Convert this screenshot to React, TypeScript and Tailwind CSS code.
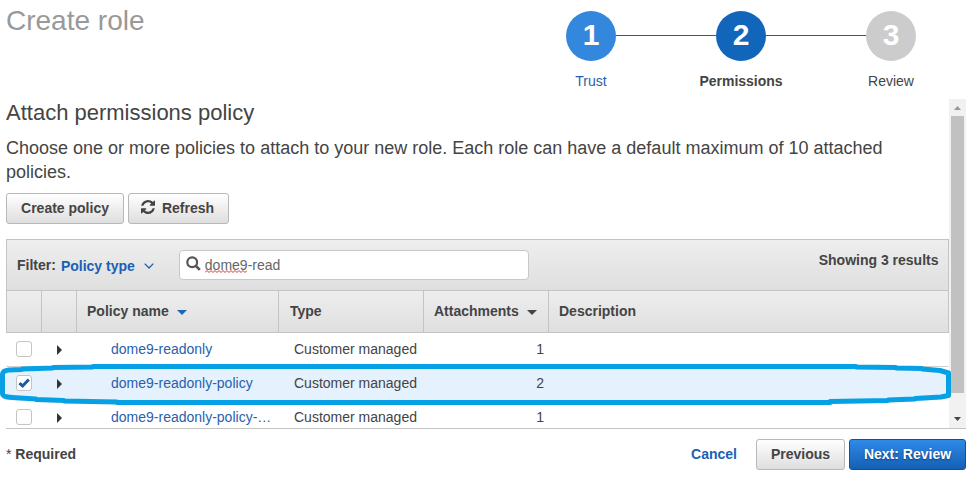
import type { ReactNode } from 'react';

type Policy = { name: string; type: string; attachments: number; checked: boolean };

const policies: Policy[] = [
  { name: 'dome9-readonly', type: 'Customer managed', attachments: 1, checked: false },
  { name: 'dome9-readonly-policy', type: 'Customer managed', attachments: 2, checked: true },
  { name: 'dome9-readonly-policy-…', type: 'Customer managed', attachments: 1, checked: false },
];

function Step({ number, label, circle, text }: { number: number; label: string; circle: string; text: string }) {
  return (
    <div className="flex w-[50px] flex-col items-center">
      <div className={`flex size-[50px] items-center justify-center rounded-full pb-px text-[30px] font-bold text-white ${circle}`}>
        {number}
      </div>
      <div className={`mt-3 text-sm leading-4 whitespace-nowrap ${text}`}>{label}</div>
    </div>
  );
}

function Button({ children, className }: { children: ReactNode; className: string }) {
  return (
    <button
      className={`flex h-[31px] items-center justify-center rounded-[3px] border border-[#b8b8b8] bg-linear-to-b from-white to-[#dedede] pb-[2px] text-sm font-bold text-[#444] ${className}`}
    >
      {children}
    </button>
  );
}

function RefreshIcon() {
  return (
    <svg className="mt-[-1px] mr-[7px] -ml-[2px] size-[14px]" viewBox="0 0 1536 1536" fill="#444">
      <path d="M1511 928q0 5-1 7-64 268-268 434.500T764 1536q-146 0-282.500-55T238 1324l-129 129q-19 19-45 19t-45-19-19-45V960q0-26 19-45t45-19h448q26 0 45 19t19 45-19 45l-137 137q71 66 161 102t187 36q134 0 250-65t186-179q11-17 53-117 8-23 30-23h192q13 0 22.500 9.500t9.500 22.500zm25-800v448q0 26-19 45t-45 19h-448q-26 0-45-19t-19-45 19-45l138-138Q969 256 768 256q-134 0-250 65T332 500q-11 17-53 117-8 23-30 23H50q-13 0-22.500-9.500T18 608v-7q65-268 270-434.500T768 0q146 0 284 55.500T1297 212l130-129q19-19 45-19t45 19 19 45z" />
    </svg>
  );
}

function Checkbox({ checked }: { checked: boolean }) {
  return (
    <span className="flex size-4 items-center justify-center rounded-[3px] border border-[#c4c4c4] bg-white">
      {checked && (
        <svg className="size-3" viewBox="0 0 12 12" fill="none" stroke="#1a5ba8" strokeWidth="3">
          <path d="M1.4 6.200 4.600 9 10.800 2.500" />
        </svg>
      )}
    </span>
  );
}

const grid = 'grid grid-cols-[35px_35px_202px_145px_125px_1fr]';

export default function App() {
  return (
    <div className="relative flex h-[479px] w-[976px] flex-col overflow-hidden bg-white pr-[10px] pl-[6px] font-['Liberation_Sans',Arial,sans-serif] text-sm text-[#444]">
      <header className="flex h-[99px] items-start justify-between">
        <h1 className="mt-[5px] text-[28px] leading-8 text-[#999]">Create role</h1>
        <div className="mt-[11px] mr-[50px] flex">
          <Step number={1} label="Trust" circle="bg-[#3388dd]" text="text-[#2a5fac]" />
          <div className="mt-6 h-px w-[100px] bg-[#555]" />
          <Step number={2} label="Permissions" circle="bg-[#1166bb]" text="font-bold" />
          <div className="mt-6 h-px w-[100px] bg-[#555]" />
          <Step number={3} label="Review" circle="bg-[#cccccc]" text="" />
        </div>
      </header>

      <main className="flex h-[330px] overflow-hidden border-b border-[#c4c4c4]">
        <div className="w-[943px]">
          <h2 className="text-[22px] leading-[27px]">Attach permissions policy</h2>
          <p className="mt-[10px] text-lg leading-6">
            Choose one or more policies to attach to your new role. Each role can have a default maximum of 10 attached
            policies.
          </p>
          <div className="mt-[9px] flex gap-1">
            <Button className="w-[118px]">Create policy</Button>
            <Button className="w-[101px]">
              <RefreshIcon />
              Refresh
            </Button>
          </div>

          <section className="mt-[15px]">
            <div className="flex h-[51px] items-center border border-b-0 border-[#c4c4c4] bg-linear-to-b from-[#eeeeee] to-[#dfdfdf] pr-[10px] pl-[10px]">
              <span className="font-bold">Filter:</span>
              <span className="mt-[2px] ml-[5px] font-bold text-[#1a5fb4]">Policy type</span>
              <svg className="mt-[2px] ml-[9px] h-[6px] w-[10px]" viewBox="0 0 10 6" fill="none" stroke="#1a5fb4" strokeWidth="1.3">
                <path d="M.7.6 5 5 9.300.6" />
              </svg>
              <div className="ml-[25px] flex h-[30px] w-[350px] items-center rounded-[4px] border border-[#c8c8c8] bg-white pl-[6px]">
                <svg className="mt-[-3px] size-[15px]" viewBox="0 0 15 15" fill="none" stroke="#555">
                  <circle cx="6.200" cy="6.200" r="4.900" strokeWidth="2.200" />
                  <path d="M9.800 9.800 13.800 13.800" strokeWidth="2.600" />
                </svg>
                <span className="ml-1 text-[#666]">
                  <span className="relative">
                    dome9
                    <svg className="absolute top-[13px] left-0 h-[3px] w-[42px]" viewBox="0 0 42 3" fill="none" stroke="#d33" strokeWidth="1">
                      <path d="M0 2.500 2 .5 4 2.500 6 .5 8 2.500 10 .5 12 2.500 14 .5 16 2.500 18 .5 20 2.500 22 .5 24 2.500 26 .5 28 2.500 30 .5 32 2.500 34 .5 36 2.500 38 .5 40 2.500 42 .5" />
                    </svg>
                  </span>
                  -read
                </span>
              </div>
              <span className="mt-[-11px] mr-[-0.5px] ml-auto font-bold">Showing 3 results</span>
            </div>

            <div className={`${grid} h-[43px] border border-[#c4c4c4] bg-linear-to-b from-[#eeeeee] to-[#dfdfdf] font-bold`}>
              <div className="border-r border-[#c4c4c4]" />
              <div className="border-r border-[#c4c4c4]" />
              <div className="flex items-center border-r border-[#c4c4c4] pb-[2px] pl-[10px]">
                Policy name
                <svg className="mt-[4px] ml-[8px] h-[5px] w-[10px]" viewBox="0 0 10 5" fill="#1a66bb">
                  <path d="M0 0h10L5 5z" />
                </svg>
              </div>
              <div className="flex items-center border-r border-[#c4c4c4] pb-[2px] pl-[11px]">Type</div>
              <div className="flex items-center border-r border-[#c4c4c4] pb-[2px] pl-[10px]">
                Attachments
                <svg className="mt-[4px] ml-[8px] h-[5px] w-[10px]" viewBox="0 0 10 5" fill="#444">
                  <path d="M0 0h10L5 5z" />
                </svg>
              </div>
              <div className="flex items-center pb-[2px] pl-[10px]">Description</div>
            </div>

            {policies.map((policy) => (
              <div
                key={policy.name}
                className={`${grid} h-[34px] items-center border-x border-b border-x-transparent pb-[2px] ${policy.checked ? 'rounded-[40px/5px] border-b-transparent bg-[#e5f1fd]' : 'border-b-[#d0d0d0] bg-white'}`}
              >
                <div className="pl-[9px]">
                  <Checkbox checked={policy.checked} />
                </div>
                <svg className="mt-[2px] ml-[15px] h-[10px] w-[5px]" viewBox="0 0 5 10" fill="#333">
                  <path d="M0 0 5 5 0 10z" />
                </svg>
                <div className="pl-[34px] whitespace-nowrap text-[#2a5fac]">{policy.name}</div>
                <div className="pl-[15px]">{policy.type}</div>
                <div className="pr-[5px] text-right">{policy.attachments}</div>
                <div />
              </div>
            ))}
          </section>
        </div>

        <div className="flex w-[17px] flex-col items-center bg-[#f1f1f1]">
          <svg className="mt-[7px] h-1 w-[7px] shrink-0" viewBox="0 0 7 4" fill="#999">
            <path d="M0 4h7L3.500 0z" />
          </svg>
          <div className="mt-[6px] h-[277px] w-[13px] shrink-0 bg-[#c1c1c1]" />
          <svg className="mt-6 h-1 w-[7px] shrink-0" viewBox="0 0 7 4" fill="#444">
            <path d="M0 0h7L3.500 4z" />
          </svg>
        </div>
      </main>

      <footer className="mt-[10px] flex h-[31px] items-center">
        <span className="pb-[2px] font-bold">
          <span className="font-normal">*</span> Required
        </span>
        <span className="mr-[19px] ml-auto pb-[2px] font-bold text-[#1a5fb4]">Cancel</span>
        <Button className="w-[89px]">Previous</Button>
        <button className="ml-1 h-[31px] w-[117px] rounded-[3px] border border-[#124f96] bg-linear-to-b from-[#2f8ae8] to-[#1460b5] pb-[2px] font-bold text-white [text-shadow:0_1px_2px_#0b3c78]">
          Next: Review
        </button>
      </footer>

      <svg
        className="pointer-events-none absolute top-[360px] left-0 h-[48px] w-[960px]"
        viewBox="0 0 960 48"
        fill="none"
        stroke="#06a0e4"
        strokeWidth="5"
        strokeLinejoin="round"
      >
        <path d="M2.500 14Q3 10.500 9 10L22 9.500V9L53 8V7.500L93 7V6.500H856V7L896 7.500V8L922 8.500V9L940 10.500 948.500 13V35.500L941 37 915 38.500V39L888 40V40.500L830 41.500V42.500H117V42L64 41V40.500L36 39.500V39L12 37.500Q2.500 37 2.500 34Z" />
      </svg>
    </div>
  );
}
